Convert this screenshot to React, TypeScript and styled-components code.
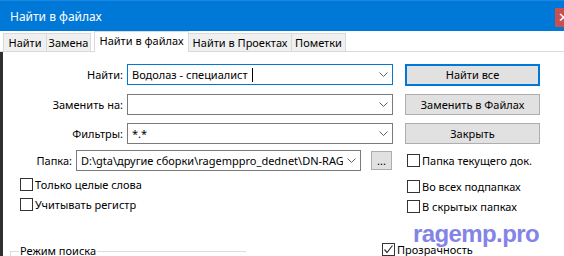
import React from "react";
import styled, { createGlobalStyle } from "styled-components";

const Global = createGlobalStyle`
  html, body { margin: 0; padding: 0; background: #fff; }
  body { font-family: "Noto Sans", "Segoe UI", sans-serif; font-size: 11px; color: #000; }
  * { box-sizing: border-box; }
`;

const Window = styled.div`
  width: 564px;
  height: 256px;
  overflow: hidden;
  display: flex;
  flex-direction: column;
  background: #fff;
`;

const TitleBar = styled.div`
  height: 31px;
  flex: none;
  background: #0078d7;
  border-top: 1px solid #1a88e0;
  display: flex;
  align-items: flex-start;
  justify-content: space-between;
`;

const Title = styled.div`
  color: #fff;
  font-size: 12px;
  line-height: 16px;
  padding: 8px 0 0 10px;
`;

const CloseBtn = styled.div`
  margin-top: 7px;
  margin-right: -21px;
  width: 30px;
  height: 19px;
  background: #c75050;
  color: #fff;
  font-size: 13px;
  line-height: 19px;
  padding-left: 3px;
`;

const TabBar = styled.div`
  height: 21px;
  flex: none;
  display: flex;
  align-items: flex-end;
  padding-left: 3px;
  border-bottom: 1px solid #d9d9d9;
`;

const Tab = styled.div<{ $active?: boolean; $w: number; $ml?: number }>`
  position: relative;
  flex: none;
  width: ${(p) => p.$w}px;
  height: ${(p) => (p.$active ? 21 : 18)}px;
  margin-bottom: ${(p) => (p.$active ? -1 : 0)}px;
  margin-left: ${(p) => p.$ml ?? -1}px;
  background: ${(p) => (p.$active ? "#fff" : "#f0f0f0")};
  border: 1px solid #d9d9d9;
  border-bottom: none;
  z-index: ${(p) => (p.$active ? 1 : 0)};
  text-align: center;
  line-height: ${(p) => (p.$active ? 18 : 17)}px;
  white-space: nowrap;
  &:first-child { margin-left: 0; }
`;

const Body = styled.div`
  flex: 1;
  position: relative;
  border-left: 3px solid #2f2f2f;
  padding-top: 12px;
  display: flex;
  flex-direction: column;
`;

const Row = styled.div<{ $mt?: number }>`
  display: flex;
  align-items: center;
  height: 21px;
  margin-top: ${(p) => p.$mt ?? 0}px;
`;

const FieldLabel = styled.div<{ $w: number }>`
  flex: none;
  width: ${(p) => p.$w}px;
  margin-right: 4px;
  text-align: right;
  white-space: nowrap;
`;

const Combo = styled.div<{ $w: number; $focus?: boolean }>`
  flex: none;
  width: ${(p) => p.$w}px;
  height: 21px;
  border: 1px solid ${(p) => (p.$focus ? "#0078d7" : "#7a7a7a")};
  background: #fff;
  display: flex;
  align-items: center;
  padding-left: 4px;
  padding-right: 4px;
`;

const ComboText = styled.div`
  flex: 1;
  min-width: 0;
  white-space: nowrap;
  overflow: hidden;
  display: flex;
  align-items: center;
`;

const Caret = styled.span`
  display: inline-block;
  width: 1px;
  height: 14px;
  background: #000;
  margin-left: 4px;
`;

const Chevron = styled.svg`
  flex: none;
  margin-left: 4px;
`;

const Button = styled.div<{ $default?: boolean }>`
  flex: none;
  margin-left: 12px;
  width: 135px;
  height: ${(p) => (p.$default ? 22 : 21)}px;
  background: #e1e1e1;
  border: ${(p) => (p.$default ? "2px solid #0078d7" : "1px solid #adadad")};
  display: flex;
  align-items: center;
  justify-content: center;
  white-space: nowrap;
`;

const DotsButton = styled.div`
  flex: none;
  margin-left: 10px;
  width: 21px;
  height: 19px;
  background: #e1e1e1;
  border: 1px solid #adadad;
  text-align: center;
  line-height: 18px;
`;

const Check = styled.label<{ $ml?: number }>`
  display: flex;
  align-items: center;
  height: 13px;
  margin-left: ${(p) => p.$ml ?? 0}px;
  white-space: nowrap;
`;

const Box = styled.span`
  flex: none;
  width: 13px;
  height: 13px;
  border: 1px solid #333;
  background: #fff;
  margin-right: 2px;
  display: flex;
  align-items: center;
  justify-content: center;
`;

const Lower = styled.div`
  display: grid;
  grid-template-columns: 387px 1fr;
  padding-left: 17px;
  margin-top: 7px;
`;

const CheckCol = styled.div<{ $pt?: number }>`
  display: flex;
  flex-direction: column;
  gap: 7px;
  padding-top: ${(p) => p.$pt ?? 0}px;
`;

const BottomRow = styled.div`
  display: flex;
  align-items: flex-start;
  margin-top: 30px;
`;

const GroupBox = styled.fieldset`
  margin: 0 0 0 7px;
  padding: 0 0 0 8px;
  width: 236px;
  height: 40px;
  border: 1px solid #dcdcdc;
  border-right: none;
  flex: none;
`;

const Legend = styled.legend`
  padding: 0 1px;
  line-height: 16px;
`;

const SmallBox = styled.div`
  margin-left: 106px;
  margin-top: 5px;
  width: 34px;
  height: 20px;
  border: 1px solid #e3e3e3;
`;

const Watermark = styled.div`
  position: absolute;
  left: 410px;
  top: 168px;
  font-family: "Liberation Sans", Arial, sans-serif;
  font-weight: bold;
  font-size: 24px;
  letter-spacing: -0.6px;
  color: #8384e6;
  pointer-events: none;
`;

const ChevronIcon = () => (
  <Chevron width="9" height="5" viewBox="0 0 9 5">
    <polyline points="0.5,0.5 4.5,4.5 8.5,0.5" fill="none" stroke="#606060" strokeWidth="1" />
  </Chevron>
);

const CheckBox = ({ label, checked, ml }: { label: string; checked?: boolean; ml?: number }) => (
  <Check $ml={ml}>
    <Box>
      {checked && (
        <svg width="11" height="11" viewBox="0 0 11 11">
          <polyline points="1.5,5.5 4,8.5 9.5,1.5" fill="none" stroke="#333" strokeWidth="1.2" />
        </svg>
      )}
    </Box>
    {label}
  </Check>
);

export default function App() {
  return (
    <>
      <Global />
      <Window>
        <TitleBar>
          <Title>Найти в файлах</Title>
          <CloseBtn>✕</CloseBtn>
        </TitleBar>
        <TabBar>
          <Tab $w={44}>Найти</Tab>
          <Tab $w={45}>Замена</Tab>
          <Tab $active $w={95} $ml={3}>Найти в файлах</Tab>
          <Tab $w={104}>Найти в Проектах</Tab>
          <Tab $w={55}>Пометки</Tab>
        </TabBar>
        <Body>
          <Row>
            <FieldLabel $w={120}>Найти:</FieldLabel>
            <Combo $w={266} $focus>
              <ComboText>
                Водолаз - специалист <Caret />
              </ComboText>
              <ChevronIcon />
            </Combo>
            <Button $default>Найти все</Button>
          </Row>
          <Row $mt={9}>
            <FieldLabel $w={120}>Заменить на:</FieldLabel>
            <Combo $w={266}>
              <ComboText />
              <ChevronIcon />
            </Combo>
            <Button>Заменить в Файлах</Button>
          </Row>
          <Row $mt={8}>
            <FieldLabel $w={120}>Фильтры:</FieldLabel>
            <Combo $w={266}>
              <ComboText>*.*</ComboText>
              <ChevronIcon />
            </Combo>
            <Button>Закрыть</Button>
          </Row>
          <Row $mt={6}>
            <FieldLabel $w={69}>Папка:</FieldLabel>
            <Combo $w={285}>
              <ComboText>{"D:\\gta\\другие сборки\\ragemppro_dednet\\DN-RAGE-test"}</ComboText>
              <ChevronIcon />
            </Combo>
            <DotsButton>...</DotsButton>
            <CheckBox label="Папка текущего док." ml={15} />
          </Row>
          <Lower>
            <CheckCol>
              <CheckBox label="Только целые слова" />
              <CheckBox label="Учитывать регистр" />
            </CheckCol>
            <CheckCol $pt={2}>
              <CheckBox label="Во всех подпапках" />
              <CheckBox label="В скрытых папках" />
            </CheckCol>
          </Lower>
          <BottomRow>
            <GroupBox>
              <Legend>Режим поиска</Legend>
            </GroupBox>
            <CheckBox label="Прозрачность" checked ml={136} />
            <SmallBox />
          </BottomRow>
          <Watermark>ragemp.pro</Watermark>
        </Body>
      </Window>
    </>
  );
}
